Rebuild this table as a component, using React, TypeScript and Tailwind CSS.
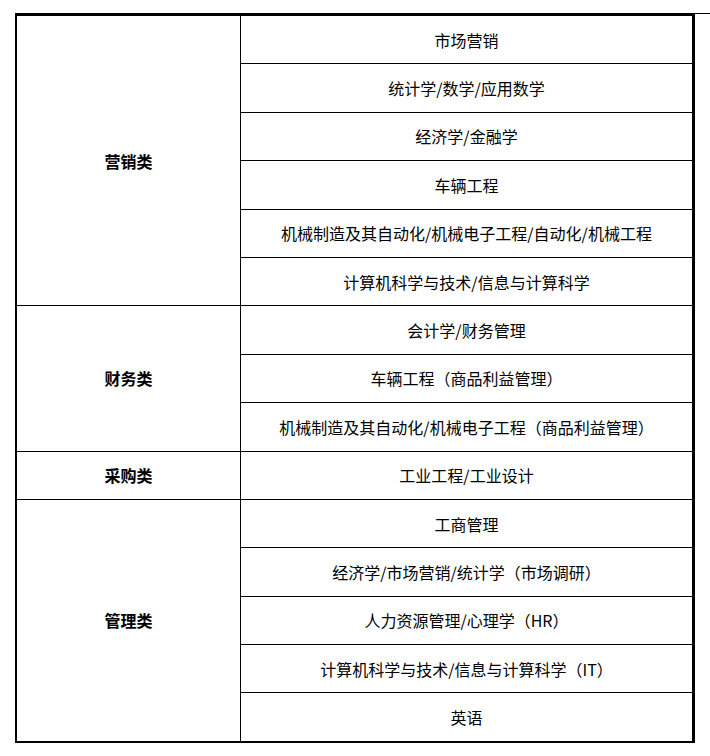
const groups = [
  {
    name: "营销类",
    items: [
      "市场营销",
      "统计学/数学/应用数学",
      "经济学/金融学",
      "车辆工程",
      "机械制造及其自动化/机械电子工程/自动化/机械工程",
      "计算机科学与技术/信息与计算科学",
    ],
  },
  {
    name: "财务类",
    items: ["会计学/财务管理", "车辆工程（商品利益管理）", "机械制造及其自动化/机械电子工程（商品利益管理）"],
  },
  {
    name: "采购类",
    items: ["工业工程/工业设计"],
  },
  {
    name: "管理类",
    items: [
      "工商管理",
      "经济学/市场营销/统计学（市场调研）",
      "人力资源管理/心理学（HR）",
      "计算机科学与技术/信息与计算科学（IT）",
      "英语",
    ],
  },
];

export default function App() {
  return (
    <div
      className="flex bg-white pt-[13px] pl-[15px] min-h-[756px] text-[16px] text-black"
      style={{ fontFamily: '"Noto Sans CJK SC", "Noto Sans", sans-serif' }}
    >
      <div className="w-[680px] shrink-0 self-start border-t-[3px] border-l-2 border-b-2 border-r-[3px] border-r-double border-black">
        {groups.map((group, gi) => (
          <div
            key={group.name}
            className={gi < groups.length - 1 ? "flex border-b border-black" : "flex"}
          >
            <div className="w-[224px] shrink-0 border-r border-black flex items-center justify-center font-bold">
              {group.name}
            </div>
            <div className="flex-1 flex flex-col">
              {group.items.map((item, i) => (
                <div
                  key={item}
                  className={
                    i < group.items.length - 1
                      ? "h-[48.4px] border-b border-black flex items-center justify-center"
                      : "h-[47.4px] flex items-center justify-center"
                  }
                >
                  {item}
                </div>
              ))}
            </div>
          </div>
        ))}
      </div>
      <div className="flex-1 self-start border-t border-black" />
    </div>
  );
}
